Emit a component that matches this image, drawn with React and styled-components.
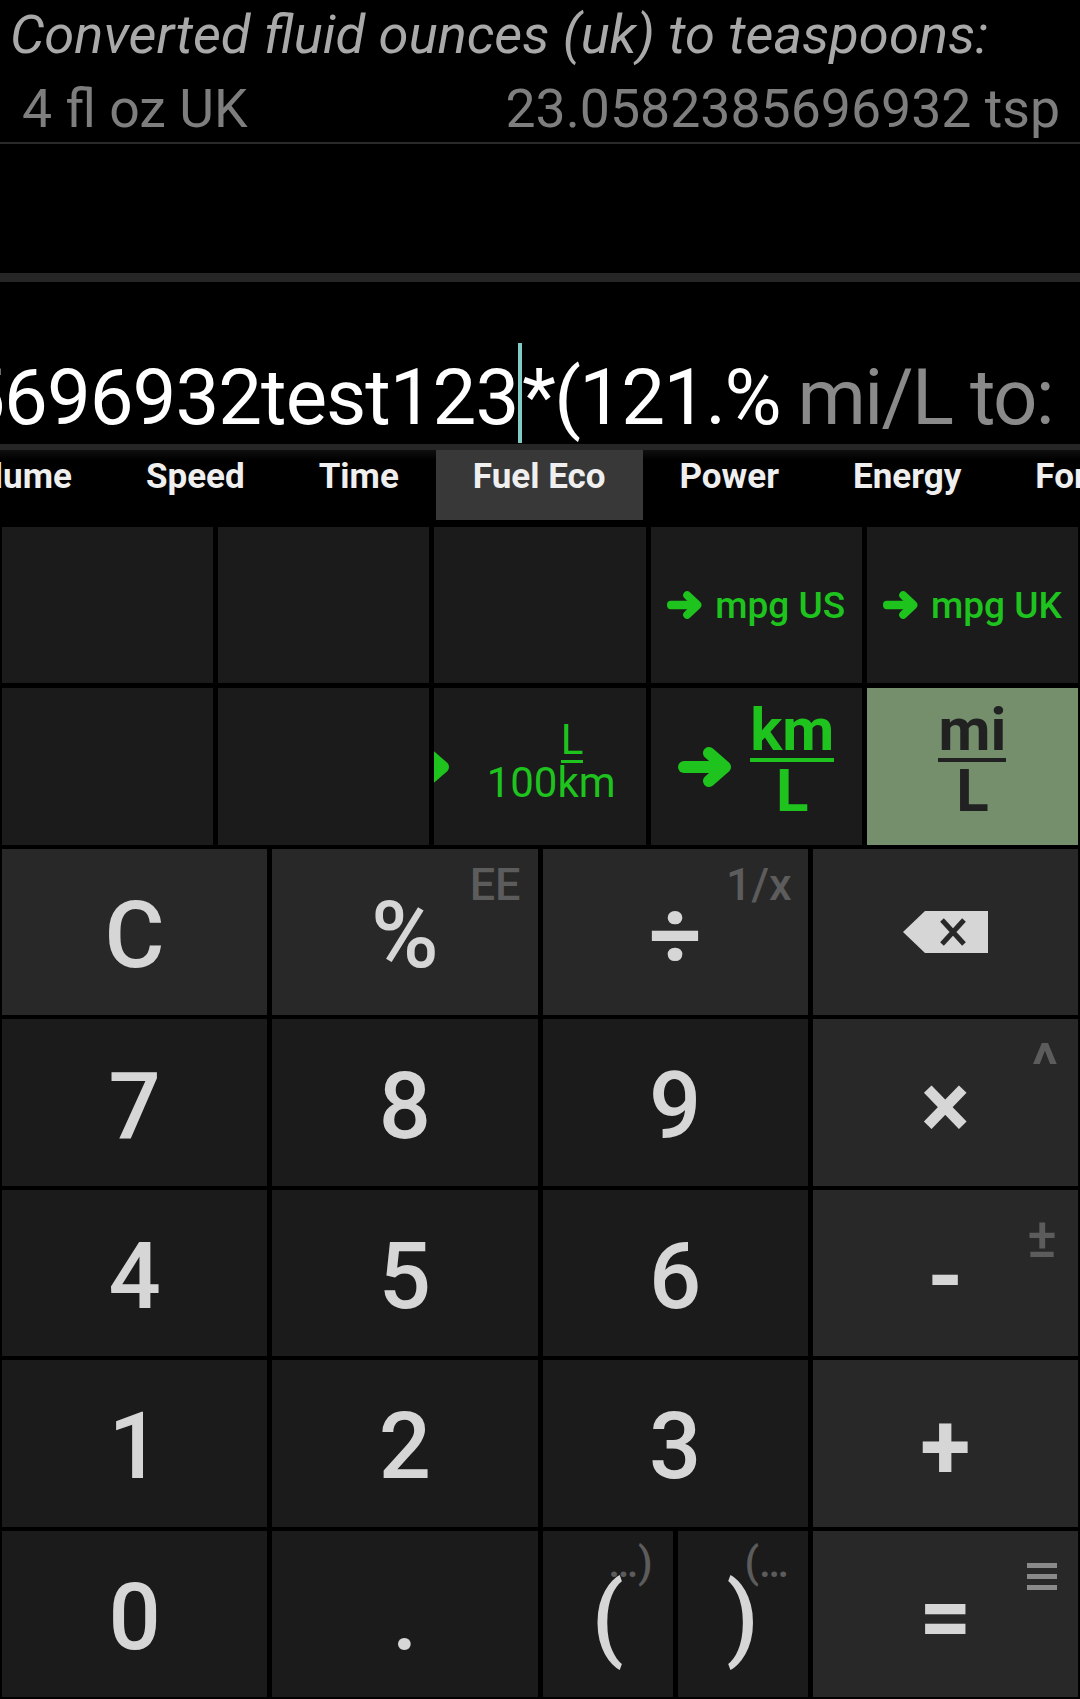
import React from 'react'
import styled, { createGlobalStyle } from 'styled-components'

const GlobalStyle = createGlobalStyle`
    *, *::before, *::after { box-sizing: border-box; }
    html, body { margin: 0; padding: 0; background: #000; }
    body { font-family: Roboto, "Noto Sans", sans-serif; }
`;

const Screen = styled.div`
    width: 1080px;
    height: 1699px;
    background: #000;
    display: flex;
    flex-direction: column;
    overflow: hidden;
`;

// history of the last conversion

const History = styled.div`
    height: 144px;
    padding-top: 4px;
    border-bottom: 2px solid #2a2a2a;
`;

const HistoryTitle = styled.div`
    padding-left: 10px;
    font-size: 54.3px;
    font-style: italic;
    line-height: 62px;
    color: #a9a9a9;
    white-space: nowrap;
`;

const HistoryRow = styled.div`
    margin-top: 12px;
    padding: 0 20px 0 22px;
    display: flex;
    justify-content: space-between;
    font-size: 53.6px;
    line-height: 62px;
    color: #7e7e7e;
    white-space: nowrap;
`;

const Blank = styled.div`
    height: 129px;
`;

const Bar = styled.div`
    height: ${p => p.$h}px;
    background: #262626;
`;

// expression input

const InputArea = styled.div`
    height: 162px;
    padding: 0 27px 1px 0;
    display: flex;
    justify-content: flex-end;
    align-items: flex-end;
    overflow: hidden;
    white-space: nowrap;
`;

const Expr = styled.span`
    flex-shrink: 0;
    margin-bottom: 6px;
    font-size: 78px;
    line-height: 1;
    letter-spacing: ${p => p.$tight ? -1.7 : -1.0}px;
    color: ${p => p.$muted ? '#8a8a8a' : '#ffffff'};
`;

const Cursor = styled.span`
    flex-shrink: 0;
    width: 4px;
    height: 100px;
    background: #80cbc4;
`;

// category tabs

const Tabs = styled.div`
    height: 70px;
    display: flex;
    overflow: hidden;
    background: linear-gradient(#0f0f0f, #000 10px);
`;

const TabTrack = styled.div`
    display: flex;
    flex-shrink: 0;
    margin-left: -85px;
`;

const Tab = styled.div`
    flex-shrink: 0;
    padding: 9px 37px 0;
    font-size: 35px;
    font-weight: 700;
    line-height: 1;
    color: #efefef;
    white-space: nowrap;
    background: ${p => p.$active ? '#383838' : 'transparent'};
`;

// unit buttons

const UnitGrid = styled.div`
    margin-top: 7px;
    padding: 0 2px;
    display: grid;
    grid-template-columns: repeat(5, minmax(0, 1fr));
    grid-template-rows: 156px 157px;
    gap: 5px;
`;

const UnitCell = styled.div`
    display: flex;
    align-items: center;
    justify-content: ${p => p.$end ? 'flex-end' : 'center'};
    padding-right: ${p => p.$end ? 30 : 0}px;
    gap: ${p => p.$gap || 0}px;
    overflow: hidden;
    background: ${p => p.$active ? '#758f6d' : '#1b1b1b'};
    color: ${p => p.$active ? '#212121' : '#1ec31e'};
`;

const UnitLabel = styled.span`
    flex-shrink: 0;
    font-size: 37px;
    font-weight: 500;
    line-height: 1;
    white-space: nowrap;
`;

const Fraction = styled.div`
    flex-shrink: 0;
    display: flex;
    flex-direction: column;
    align-items: center;
    margin-bottom: ${p => p.$lift || 0}px;
    font-size: ${p => p.$size}px;
    font-weight: ${p => p.$weight};
    line-height: 0.95;
    white-space: nowrap;
`;

const Numerator = styled.span`
    margin-left: ${p => p.$shift || 0}px;
    border-bottom: ${p => p.$rule}px solid currentColor;
`;

const ArrowSvg = styled.svg`
    flex-shrink: 0;
    display: block;
`;

// keypad

const Keypad = styled.div`
    margin-top: 4px;
    padding: 0 2px;
    height: 848px;
    display: grid;
    grid-template-columns: repeat(4, minmax(0, 1fr));
    grid-template-rows: repeat(5, minmax(0, 1fr));
    gap: 4px 5px;
`;

const Key = styled.div`
    position: relative;
    display: flex;
    align-items: center;
    justify-content: center;
    background: ${p => p.$light ? '#282828' : '#1b1b1b'};
    color: #d6d6d6;
`;

const KeyGlyph = styled.span`
    margin-top: 8px;
    font-size: 92px;
    font-weight: ${p => p.$bold ? 700 : 500};
    line-height: 1;
`;

const SubLabel = styled.span`
    position: absolute;
    top: ${p => p.$top ?? 13}px;
    right: ${p => p.$right ?? 17}px;
    font-size: ${p => p.$size ?? 45}px;
    font-weight: ${p => p.$bold ? 700 : 500};
    line-height: 1;
    color: #5c5c5c;
    white-space: nowrap;
`;

const SubIcon = styled.svg`
    position: absolute;
    top: 32px;
    right: 21px;
`;

const ParenPair = styled.div`
    display: grid;
    grid-template-columns: repeat(2, minmax(0, 1fr));
    gap: 5px;
`;

function Arrow({ w, h }) {
    return (
        <ArrowSvg width={w} height={h} viewBox="0 0 54 40" preserveAspectRatio="none">
            <g stroke="currentColor" strokeWidth="12" strokeLinecap="round" strokeLinejoin="round" fill="none">
                <path d="M6 20H40" />
                <path d="M31 6L47 20L31 34" />
            </g>
        </ArrowSvg>
    )
}

function Backspace() {
    return (
        <svg width="85" height="42" viewBox="0 0 85 42">
            <path d="M22 0H85V42H22L0 21Z" fill="#d6d6d6" />
            <path d="M39 9L61 33M61 9L39 33" stroke="#282828" strokeWidth="5" />
        </svg>
    )
}

const tabs = ['Volume', 'Speed', 'Time', 'Fuel Eco', 'Power', 'Energy', 'Force']

export default function App() {
    return (
        <Screen>
            <GlobalStyle />
            <History>
                <HistoryTitle>Converted fluid ounces (uk) to teaspoons:</HistoryTitle>
                <HistoryRow>
                    <span>4 fl oz UK</span>
                    <span>23.0582385696932 tsp</span>
                </HistoryRow>
            </History>
            <Blank />
            <Bar $h={9} />

            <InputArea>
                <Expr>23.0582385696932test123</Expr>
                <Cursor />
                <Expr $tight>*(121.%</Expr>
                <Expr $tight $muted>&nbsp;mi/L to:</Expr>
            </InputArea>
            <Bar $h={6} />

            <Tabs>
                <TabTrack>
                    {tabs.map(t => <Tab key={t} $active={t === 'Fuel Eco'}>{t}</Tab>)}
                </TabTrack>
            </Tabs>

            <UnitGrid>
                <UnitCell />
                <UnitCell />
                <UnitCell />
                <UnitCell $gap={13}>
                    <Arrow w={35} h={28} />
                    <UnitLabel>mpg US</UnitLabel>
                </UnitCell>
                <UnitCell $gap={13}>
                    <Arrow w={35} h={28} />
                    <UnitLabel>mpg UK</UnitLabel>
                </UnitCell>

                <UnitCell />
                <UnitCell />
                <UnitCell $end $gap={37}>
                    <Arrow w={54} h={40} />
                    <Fraction $size={42} $weight={400} $lift={10}>
                        <Numerator $rule={3} $shift={42}>L</Numerator>
                        <span>100km</span>
                    </Fraction>
                </UnitCell>
                <UnitCell $gap={18}>
                    <Arrow w={54} h={40} />
                    <Fraction $size={60} $weight={700} $lift={14}>
                        <Numerator $rule={4}>km</Numerator>
                        <span>L</span>
                    </Fraction>
                </UnitCell>
                <UnitCell $active>
                    <Fraction $size={60} $weight={700} $lift={14}>
                        <Numerator $rule={4}>mi</Numerator>
                        <span>L</span>
                    </Fraction>
                </UnitCell>
            </UnitGrid>

            <Keypad>
                <Key $light><KeyGlyph>C</KeyGlyph></Key>
                <Key $light>
                    <KeyGlyph>%</KeyGlyph>
                    <SubLabel>EE</SubLabel>
                </Key>
                <Key $light>
                    <KeyGlyph $bold>÷</KeyGlyph>
                    <SubLabel $right={16}>1/x</SubLabel>
                </Key>
                <Key $light><Backspace /></Key>

                <Key><KeyGlyph>7</KeyGlyph></Key>
                <Key><KeyGlyph>8</KeyGlyph></Key>
                <Key><KeyGlyph>9</KeyGlyph></Key>
                <Key $light>
                    <KeyGlyph $bold>×</KeyGlyph>
                    <SubLabel $bold $size={60} $top={16} $right={20}>^</SubLabel>
                </Key>

                <Key><KeyGlyph>4</KeyGlyph></Key>
                <Key><KeyGlyph>5</KeyGlyph></Key>
                <Key><KeyGlyph>6</KeyGlyph></Key>
                <Key $light>
                    <KeyGlyph $bold>-</KeyGlyph>
                    <SubLabel $size={56} $top={20} $right={21}>±</SubLabel>
                </Key>

                <Key><KeyGlyph>1</KeyGlyph></Key>
                <Key><KeyGlyph>2</KeyGlyph></Key>
                <Key><KeyGlyph>3</KeyGlyph></Key>
                <Key $light><KeyGlyph $bold>+</KeyGlyph></Key>

                <Key><KeyGlyph>0</KeyGlyph></Key>
                <Key><KeyGlyph>.</KeyGlyph></Key>
                <ParenPair>
                    <Key>
                        <KeyGlyph>(</KeyGlyph>
                        <SubLabel $size={42} $top={11} $right={20}>…)</SubLabel>
                    </Key>
                    <Key>
                        <KeyGlyph>)</KeyGlyph>
                        <SubLabel $size={42} $top={11} $right={19}>(…</SubLabel>
                    </Key>
                </ParenPair>
                <Key $light>
                    <KeyGlyph $bold>=</KeyGlyph>
                    <SubIcon width="30" height="27" viewBox="0 0 30 27">
                        <rect x="0" y="0" width="30" height="5" fill="#8a8a8a" />
                        <rect x="0" y="11" width="30" height="5" fill="#8a8a8a" />
                        <rect x="0" y="22" width="30" height="5" fill="#8a8a8a" />
                    </SubIcon>
                </Key>
            </Keypad>
        </Screen>
    )
}
